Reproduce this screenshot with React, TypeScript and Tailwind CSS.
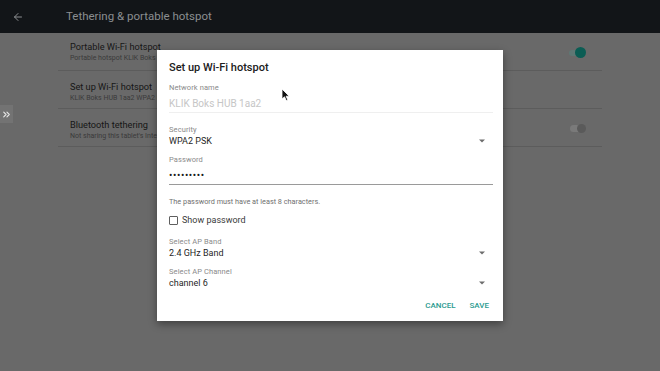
import React from 'react';
import { ArrowLeft, ChevronsRight } from 'lucide-react';

const font = { fontFamily: 'Roboto, "Noto Sans", sans-serif' };

interface SettingRowProps {
    title: string;
    subtitle: string;
    pt: string;
    toggle?: 'on' | 'off';
}

const SettingRow: React.FC<SettingRowProps> = ({ title, subtitle, pt, toggle }) => (
    <div className={`relative h-[38px] border-b border-[#5c5c5c] pl-[12px] pr-[14px] ${pt}`}>
        <div className="text-[9.2px] leading-[12px] text-[#161616] whitespace-nowrap">{title}</div>
        <div className="text-[7px] leading-[10px] text-[#3a3a3a] whitespace-nowrap">{subtitle}</div>
        {toggle === 'on' && (
            <div className="absolute right-[16px] top-[14px] flex items-center">
                <div className="w-[14px] h-[6px] rounded-full bg-[#5f7774]" />
                <div className="-ml-[8px] w-[11px] h-[11px] rounded-full bg-[#0b5d54]" />
            </div>
        )}
        {toggle === 'off' && (
            <div className="absolute right-[16px] top-[15px] flex items-center">
                <div className="w-[14px] h-[7px] rounded-full bg-[#7a7a7a]" />
                <div className="-ml-[7px] w-[9px] h-[9px] rounded-full bg-[#5a5a5a]" />
            </div>
        )}
    </div>
);

const DropArrow = () => (
    <svg width="6" height="4" viewBox="0 0 6 4" className="mr-[8px]">
        <path d="M0 0.5 L6 0.5 L3 3.5 Z" fill="#6d6d6d" />
    </svg>
);

const Label: React.FC<{ text: string; mt: string }> = ({ text, mt }) => (
    <div className={`${mt} h-[10px] text-[7.5px] leading-[10px] text-[#8a8a8a] tracking-[0.1px]`}>{text}</div>
);

const SelectValue: React.FC<{ text: string }> = ({ text }) => (
    <div className="h-[12px] flex items-center justify-between">
        <span className="text-[9px] leading-[12px] text-[#1f1f1f]">{text}</span>
        <DropArrow />
    </div>
);

export default function App() {
    return (
        <div className="relative w-[660px] h-[371px] overflow-hidden bg-[#696969]" style={font}>
            <div className="h-[33px] bg-[#121518] flex items-center">
                <ArrowLeft size={12} strokeWidth={2} className="ml-[12px] text-[#8c8f91]" />
                <span className="ml-[42px] text-[11.5px] text-[#8b8e90]">Tethering &amp; portable hotspot</span>
            </div>

            <div className="ml-[58px] w-[544px]">
                <SettingRow title="Portable Wi-Fi hotspot" subtitle="Portable hotspot KLIK Boks HUB 1aa2 active" pt="pt-[8px]" toggle="on" />
                <SettingRow title="Set up Wi-Fi hotspot" subtitle="KLIK Boks HUB 1aa2 WPA2 PSK portable Wi-Fi hotspot" pt="pt-[10px]" />
                <SettingRow title="Bluetooth tethering" subtitle="Not sharing this tablet's Internet connection" pt="pt-[10px]" toggle="off" />
            </div>

            <div className="absolute left-0 top-[105px] w-[13px] h-[18px] bg-[#737373] flex items-center justify-center">
                <ChevronsRight size={11} strokeWidth={2.5} className="text-[#e6e6e6]" />
            </div>

            <div className="absolute left-[157px] top-[50px] w-[346px] h-[271px] bg-white shadow-[0_3px_8px_rgba(0,0,0,0.4)] pl-[12px] pr-[10px] pt-[11px]">
                <div className="h-[14px] text-[11px] leading-[14px] font-medium text-[#202020]">Set up Wi-Fi hotspot</div>

                <Label text="Network name" mt="mt-[8px]" />
                <div className="mt-[5px] h-[12px] text-[10px] leading-[12px] text-[#c6c6c6]">KLIK Boks HUB 1aa2</div>
                <div className="mt-[2px] h-px bg-[#efefef]" />

                <Label text="Security" mt="mt-[12px]" />
                <SelectValue text="WPA2 PSK" />

                <Label text="Password" mt="mt-[8px]" />
                <div className="mt-[5px] h-[12px] text-[10px] leading-[12px] text-[#1a1a1a] tracking-[0.6px]">•••••••••</div>
                <div className="mt-[2px] h-px bg-[#9a9a9a]" />

                <div className="mt-[12px] h-[10px] text-[7.3px] leading-[10px] text-[#707070]">The password must have at least 8 characters.</div>

                <div className="mt-[7px] h-[12px] flex items-center">
                    <div className="w-[9px] h-[9px] border-[1.3px] border-[#5f5f5f] rounded-[1px]" />
                    <span className="ml-[4px] text-[9px] leading-[12px] text-[#3a3a3a]">Show password</span>
                </div>

                <Label text="Select AP Band" mt="mt-[11px]" />
                <SelectValue text="2.4 GHz Band" />

                <Label text="Select AP Channel" mt="mt-[8px]" />
                <SelectValue text="channel 6" />

                <div className="mt-[11px] h-[12px] flex justify-end items-center pr-[4px] text-[8px] leading-[12px] font-medium text-[#2a9b90]">
                    <span>CANCEL</span>
                    <span className="ml-[14px]">SAVE</span>
                </div>
            </div>

            <svg className="absolute left-[281px] top-[88px]" width="9" height="14" viewBox="0 0 9 14">
                <path d="M1 1 L1 11 L3.5 8.8 L5.3 12.6 L6.8 11.9 L5.1 8.2 L8.2 8.2 Z" fill="#111" stroke="#fff" strokeWidth="0.8" />
            </svg>
        </div>
    );
}
